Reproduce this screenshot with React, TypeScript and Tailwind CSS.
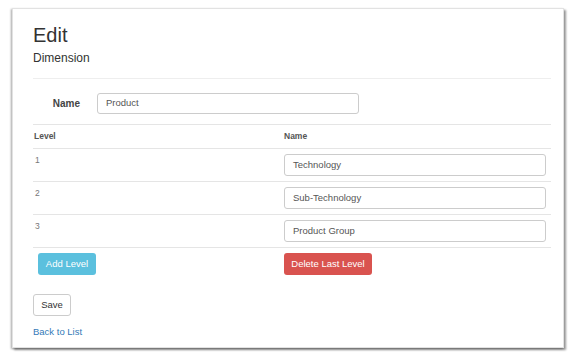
import React from "react";

const levels = [
    { level: 1, name: "Technology" },
    { level: 2, name: "Sub-Technology" },
    { level: 3, name: "Product Group" },
];

export default function App() {
    return (
        <div className="w-[576px] h-[364px] bg-white pt-[8px] pl-[12px] font-['Liberation_Sans',Arial,sans-serif] text-[#333]">
            <div className="w-[552px] h-[340px] bg-white border border-[#e2e2e2] shadow-[-1px_1px_2px_rgba(0,0,0,0.35),2px_2px_2px_rgba(0,0,0,0.4)] pt-[14px] pl-[20px] pr-[12px]">
                <h1 className="text-[20px] leading-[24px] font-normal">Edit</h1>
                <h4 className="mt-[3px] text-[12px] leading-[16px]">Dimension</h4>
                <div className="mt-[12px] border-t border-[#eee]" />

                {/* Nom de la dimension */}
                <div className="flex items-center pt-[14px] pb-[10px]">
                    <label className="w-[64px] text-right pr-[17px] text-[10px] font-bold text-[#444]">Name</label>
                    <div className="w-[262px] h-[21px] border border-[#ccc] rounded-[3px] px-[8px] flex items-center text-[9.5px] text-[#555]">
                        Product
                    </div>
                </div>

                <div className="border-t border-[#e5e5e5]">
                    <div className="grid grid-cols-[251px_1fr] h-[24px] items-center border-b border-[#e5e5e5] text-[8.5px] font-bold text-[#555]">
                        <span className="pl-[1px]">Level</span>
                        <span>Name</span>
                    </div>
                    {levels.map((l) => (
                        <div key={l.level} className="grid grid-cols-[251px_1fr] h-[33px] border-b border-[#e5e5e5]">
                            <span className="pl-[2px] pt-[6px] text-[8.5px] leading-[10px] text-[#777]">{l.level}</span>
                            <div className="pt-[5px] pr-[5px]">
                                <div className="h-[22px] border border-[#ccc] rounded-[3px] px-[8px] flex items-center text-[9.5px] text-[#555]">
                                    {l.name}
                                </div>
                            </div>
                        </div>
                    ))}
                    <div className="grid grid-cols-[251px_1fr] pt-[5px]">
                        <div className="pl-[5px]">
                            <button className="block w-[58px] h-[22px] rounded-[3px] bg-[#5bc0de] text-white text-[9.5px]">Add Level</button>
                        </div>
                        <div>
                            <button className="block w-[88px] h-[22px] rounded-[3px] bg-[#d9534f] text-white text-[9.5px]">Delete Last Level</button>
                        </div>
                    </div>
                </div>

                <button className="block mt-[19px] w-[38px] h-[22px] border border-[#ccc] rounded-[3px] bg-white text-[9.5px] text-[#333]">Save</button>
                <a className="block mt-[10px] text-[9.5px] leading-[12px] text-[#337ab7]">Back to List</a>
            </div>
        </div>
    );
}
